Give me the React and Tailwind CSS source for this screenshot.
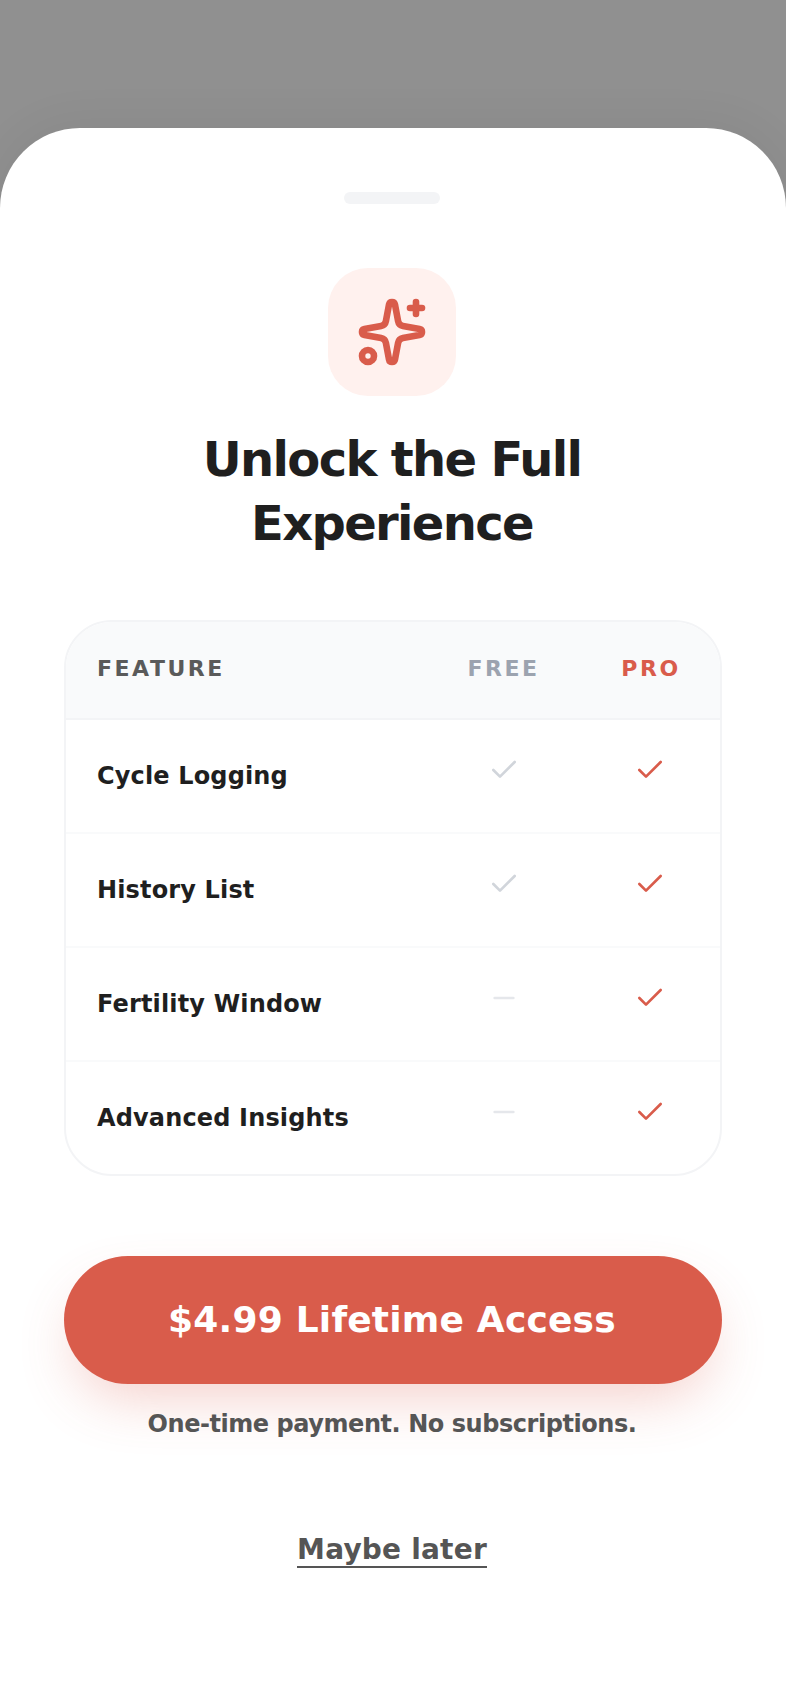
import React from 'react';
import { Sparkles, Check, Minus } from 'lucide-react';

const ROWS = [
    { name: 'Cycle Logging', free: true },
    { name: 'History List', free: true },
    { name: 'Fertility Window', free: false },
    { name: 'Advanced Insights', free: false },
];

const App = () => {
    return (
        <div className="min-h-[1704px] flex flex-col pt-[128px] bg-[#909090] font-['DejaVu_Sans',sans-serif]">
            <div className="flex-1 flex flex-col items-center bg-white rounded-t-[80px] pt-16 px-16 shadow-[0_-4px_48px_rgba(0,0,0,0.06)]">
                {/* Drag handle */}
                <div className="w-24 h-3 rounded-full bg-[#f3f4f6] mb-16 mr-[2px]" />

                <div className="w-32 h-32 rounded-[40px] bg-[#fff1ee] flex items-center justify-center mb-[31px] mr-[2px]">
                    <Sparkles size={72} strokeWidth={2.2} className="text-[#d95c4b]" />
                </div>

                <h1 className="w-[520px] mr-[2px] text-center text-[48px] leading-[64px] font-bold tracking-[-1.67px] text-[#1f1f1f] mb-[65px]">
                    Unlock the Full Experience
                </h1>

                {/* Comparison table */}
                <div className="w-full border-2 border-[#f3f4f6] rounded-[48px] overflow-hidden mb-20">
                    <div className="grid grid-cols-[1fr_153px_140px] items-center h-[98px] pl-[31px] pb-1 bg-[#f9fafb] border-b-2 border-[#f3f4f6] text-[22px] font-bold tracking-[2.5px]">
                        <span className="text-[#5a5a5a]">FEATURE</span>
                        <span className="text-center text-[#9ca3af]">FREE</span>
                        <span className="text-center text-[#d95c4b] pl-[2px]">PRO</span>
                    </div>
                    {ROWS.map((row, i) => (
                        <div
                            key={row.name}
                            className={`grid grid-cols-[1fr_153px_140px] items-center pl-[31px] ${i < ROWS.length - 1 ? 'h-[114px] border-b-2 border-[#f9fafb]' : 'h-[112px]'}`}
                        >
                            <span className="text-[24px] font-bold tracking-[0.15px] text-[#1f1f1f]">{row.name}</span>
                            <div className="flex justify-center mb-3">
                                {row.free
                                    ? <Check size={32} className="text-[#d1d5db]" />
                                    : <Minus size={32} className="text-[#e5e7eb]" />}
                            </div>
                            <div className="flex justify-center mb-3">
                                <Check size={32} className="text-[#d95c4b]" />
                            </div>
                        </div>
                    ))}
                </div>

                <button className="w-full h-32 pr-[2px] rounded-full bg-[#d95c4b] text-white text-[36px] font-bold tracking-[0.2px] shadow-[0_24px_56px_-12px_rgba(217,92,75,0.3)] mb-6">
                    $4.99 Lifetime Access
                </button>
                <p className="text-[24px] leading-8 font-bold tracking-[-0.45px] text-[#555555] mb-[94px] mr-[2px]">
                    One-time payment. No subscriptions.
                </p>
                <button className="text-[28px] leading-8 font-bold tracking-[0.2px] text-[#555555] border-b-2 border-[#555555] mr-[2px]">
                    Maybe later
                </button>
            </div>
        </div>
    );
};

export default App;
